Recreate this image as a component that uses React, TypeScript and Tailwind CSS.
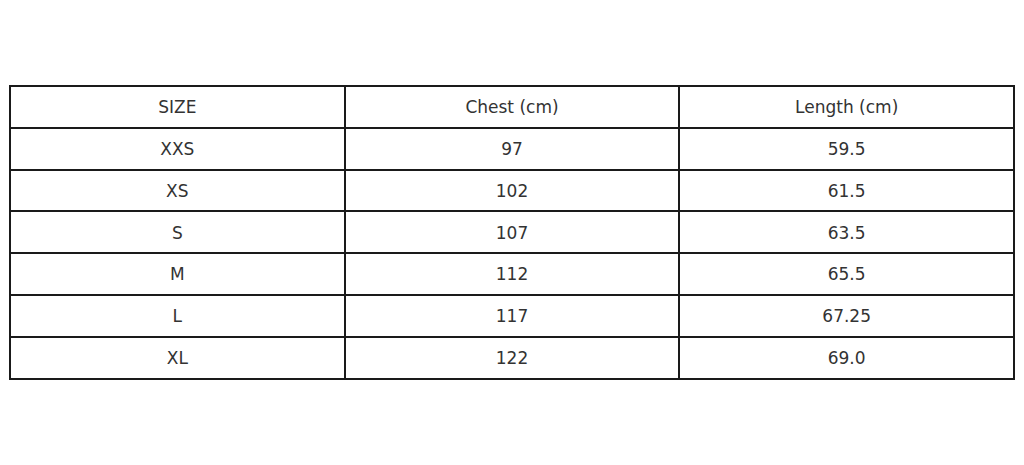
const rows = [
  ['SIZE', 'Chest (cm)', 'Length (cm)'],
  ['XXS', '97', '59.5'],
  ['XS', '102', '61.5'],
  ['S', '107', '63.5'],
  ['M', '112', '65.5'],
  ['L', '117', '67.25'],
  ['XL', '122', '69.0'],
];

export default function App() {
  return (
    <div className="w-[1024px] h-[465px] bg-white pt-[85px] pl-[9px] font-['DejaVu_Sans',sans-serif]">
      <table className="w-[1006px] border-collapse text-[17px] text-[#333]">
        <tbody>
          {rows.map((r, i) => (
            <tr key={i} className="h-[41.8px]">
              {r.map((c, j) => (
                <td key={j} className="w-1/3 border-2 border-[#1a1a1a] text-center px-0 pt-[2px] pb-0 align-middle">
                  {c}
                </td>
              ))}
            </tr>
          ))}
        </tbody>
      </table>
    </div>
  );
}
